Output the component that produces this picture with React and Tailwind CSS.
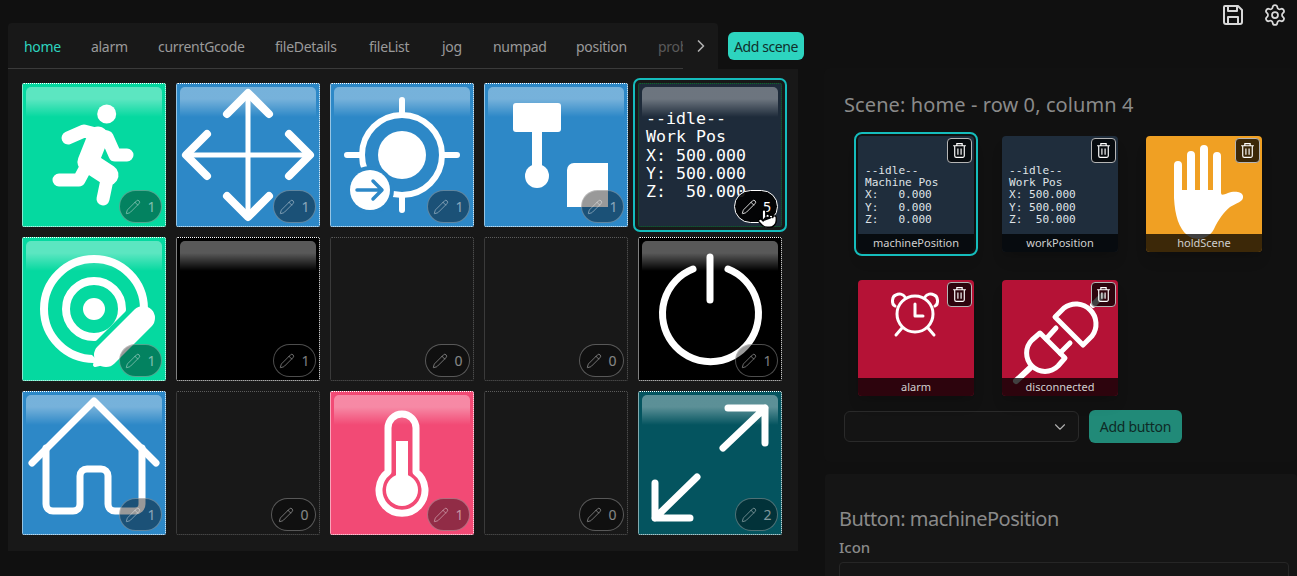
import React from "react";
import { Pencil, Pointer, ChevronRight, ChevronDown, Settings } from "lucide-react";

// Icons are drawn in the coordinates of their button (144 for grid cells, 116 for tiles)
const W = { fill: "none", stroke: "#fff", strokeLinecap: "round", strokeLinejoin: "round" };

const RunIcon = () => (
  <g {...W}>
    <circle cx="84.7" cy="31" r="9.5" fill="#fff" stroke="none" />
    <path d="M46 55 L62 48 L85 54 L93 72 L105 72" strokeWidth="13" />
    <path d="M76 54 L66 79 L86 92" strokeWidth="21" />
    <path d="M86 92 L81 116" strokeWidth="13" />
    <path d="M64 84 L57 97 L37 97" strokeWidth="13" />
  </g>
);

const MoveIcon = () => (
  <g {...W}>
    <path d="M72 10 V134 M10 72 H134" strokeWidth="5" />
    <path d="M51 31 L72 10 L93 31 M51 113 L72 134 L93 113 M31 51 L10 72 L31 93 M113 51 L134 72 L113 93" strokeWidth="8" />
  </g>
);

const TargetIcon = ({ bg }) => (
  <g {...W}>
    <circle cx="72" cy="72" r="24" fill="#fff" stroke="none" />
    <circle cx="72" cy="72" r="40" strokeWidth="6" />
    <path d="M72 17 V30 M72 114 V127 M17 72 H30 M114 72 H127" strokeWidth="6" />
    <circle cx="40" cy="107" r="24" fill={bg} stroke="none" />
    <circle cx="40" cy="107" r="20" fill="#fff" stroke="none" />
    <path d="M27 107 H51 M43 98 L52 107 L43 116" stroke={bg} strokeWidth="3.5" />
  </g>
);

const ProbeIcon = () => (
  <g>
    <rect x="29" y="20" width="48" height="29" rx="3" fill="#fff" />
    <rect x="48" y="49" width="10" height="36" fill="#fff" />
    <circle cx="53" cy="93" r="12" fill="#fff" />
    <path d="M90 80 H124 V124 H83 V87 A7 7 0 0 1 90 80 Z" fill="#fff" />
  </g>
);

const TargetEditIcon = ({ bg }) => (
  <g {...W}>
    <circle cx="72" cy="72" r="11" fill="#fff" stroke="none" />
    <circle cx="72" cy="72" r="28" strokeWidth="8" />
    <circle cx="72" cy="72" r="50" strokeWidth="8" />
    <path d="M125 77 L77 125" stroke={bg} strokeWidth="34" strokeLinecap="butt" />
    <path d="M121 81 L84 118" strokeWidth="24" />
    <path d="M76 116 L73 128 L86 125 Z" fill="#fff" strokeWidth="4" />
  </g>
);

const PowerIcon = () => (
  <g {...W}>
    <path d="M72 20 V63" strokeWidth="7" />
    <path d="M55 32 A48 48 0 1 0 90 32" strokeWidth="7" />
  </g>
);

const HomeIcon = () => (
  <g {...W}>
    <path d="M10 72 L72 10 L134 72" strokeWidth="7" />
    <path d="M24 57 V113 a7 7 0 0 0 7 7 H51 a7 7 0 0 0 7 -7 V85 a7 7 0 0 1 7 -7 H79 a7 7 0 0 1 7 7 V113 a7 7 0 0 0 7 7 H113 a7 7 0 0 0 7 -7 V57" strokeWidth="7" />
  </g>
);

const ThermoIcon = () => (
  <g {...W}>
    <path d="M58 81 V37 a14 14 0 0 1 28 0 V81 a23 23 0 1 1 -28 0 Z" strokeWidth="7" />
    <circle cx="72" cy="99" r="16" fill="#fff" stroke="none" />
    <path d="M72 50 V95" strokeWidth="12" strokeLinecap="butt" />
  </g>
);

const ExpandIcon = () => (
  <g {...W}>
    <path d="M90 17 H127 V52 M127 17 L85 57" strokeWidth="7" />
    <path d="M17 92 V127 H52 M17 127 L59 86" strokeWidth="7" />
  </g>
);

const HandIcon = () => (
  <g>
    <path d="M32 29 V58 M45 19 V58 M58 13 V58 M71 20 V58" {...W} strokeWidth="8" />
    <path d="M28 54 V62 C29 80 33 92 41 99 C50 106 63 103 68 93 C72 84 78 76 84 71 C90 67 98 66 97 60 C96 55 87 55 82 57 C77 59 75 60 75 56 V54 Z" fill="#fff" />
  </g>
);

const AlarmIcon = () => (
  <g {...W} strokeWidth="3">
    <circle cx="57" cy="34" r="18" />
    <path d="M57 24 V36 H65" />
    <path d="M37 26 C33 24 34 16 38 15 C41 13 45 14 47 17 M77 26 C81 24 80 16 76 15 C73 13 69 14 67 17" />
    <path d="M44 48 L38 55 M70 48 L76 55" />
  </g>
);

const PlugIcon = () => (
  <g {...W} strokeWidth="5">
    <path d="M53 37 L62 28 A20 20 0 0 1 90 56 L81 65 Z" />
    <path d="M91 25 L100 16" strokeWidth="6" />
    <path d="M38 53 L63 78 L56 86 A18 18 0 0 1 30 60 Z" />
    <path d="M44 59 L54 48 M58 73 L68 63" />
    <path d="M28 88 L14 101" strokeWidth="6" />
  </g>
);

const Trash = () => (
  <svg viewBox="0 0 16 16" className="w-[17px] h-[17px]" fill="none" stroke="#fff" strokeWidth="1.1">
    <path d="M2 3.5 H14 M5.5 3.5 V1.5 H10.5 V3.5 M3.5 3.5 V13 a1.5 1.5 0 0 0 1.5 1.5 H11 a1.5 1.5 0 0 0 1.5 -1.5 V3.5 M6.5 6 V12 M9.5 6 V12" />
  </svg>
);

const IDLE_WORK = "--idle--\nWork Pos\nX: 500.000\nY: 500.000\nZ:  50.000";
const IDLE_MACHINE = "--idle--\nMachine Pos\nX:   0.000\nY:   0.000\nZ:   0.000";
const MONO = "font-['DejaVu_Sans_Mono',monospace]";

function Cell({ bg, icon: Icon, count, text, active }) {
  const empty = !bg;
  return (
    <div
      className={`relative w-[144px] h-[144px] rounded-[2px] border border-dotted ${
        active ? "outline-2 outline-offset-[3.5px] outline-[#15bcbc] border-[#0b6a25]" : empty ? "border-[#5c5c5c]" : "border-white"
      }`}
      style={{ background: bg || "transparent" }}
    >
      {Icon && (
        <svg viewBox="0 0 144 144" className="absolute -inset-px w-[144px] h-[144px]">
          <Icon bg={bg} />
        </svg>
      )}
      {text && (
        <pre className={`absolute left-[7px] top-[26px] text-[16.6px] leading-[18.3px] text-white ${MONO}`}>{text}</pre>
      )}
      {!empty && (
        <div className="absolute left-[3px] top-[3px] w-[136px] h-[30px] rounded-t-[5px] bg-gradient-to-b from-white/35 from-40% to-white/0" />
      )}
      <div
        className={`absolute bottom-[3px] right-[3px] h-[33px] rounded-[17px] border flex items-center justify-center gap-[6px] ${
          active
            ? "w-[44px] bg-black/90 border-white text-white"
            : empty
              ? "w-[45px] bg-black/30 border-white/30 text-white/50"
              : "w-[43px] bg-black/40 border-white/30 text-white/50"
        }`}
      >
        <Pencil size={16} strokeWidth={1.25} />
        <span className="text-[14px]">{count}</span>
      </div>
      {active && (
        <Pointer size={21} strokeWidth={1.5} fill="#fff" color="#000" className="absolute left-[118px] top-[124px]" />
      )}
    </div>
  );
}

function Tile({ bg, icon: Icon, text, label, active }) {
  return (
    <div className={`relative w-[116px] h-[116px] rounded-[4px] overflow-visible shadow-lg ${active ? "outline-2 outline-offset-2 outline-[#15bcbc]" : ""}`} style={{ background: bg }}>
      {Icon && (
        <svg viewBox="0 0 116 116" className="absolute inset-0 w-[116px] h-[116px]">
          <Icon />
        </svg>
      )}
      {text && (
        <pre className={`absolute left-[7px] top-[29px] text-[11.1px] leading-[12.2px] text-[#dfe3e7] ${MONO}`}>{text}</pre>
      )}
      <div className="absolute inset-x-0 bottom-0 h-[18px] rounded-b-[4px] bg-black/75 text-center text-[11px] leading-[18px] text-[#d0d0d0]">
        {label}
      </div>
      <div className="absolute top-[2px] right-[2px] w-[25px] h-[25px] rounded-[4px] border border-[#b5b5b5] bg-black/75 flex items-center justify-center">
        <Trash />
      </div>
    </div>
  );
}

const TABS = [
  { name: "home", width: "w-[67px]" },
  { name: "alarm", width: "w-[67px]" },
  { name: "currentGcode", width: "w-[117px]" },
  { name: "fileDetails", width: "w-[94px]" },
  { name: "fileList", width: "w-[73px]" },
  { name: "jog", width: "w-[51px]" },
  { name: "numpad", width: "w-[83px]" },
  { name: "position", width: "w-[82px]" },
  { name: "probe", width: "w-[67px]" },
];

const CELLS = [
  { bg: "#05d9a0", icon: RunIcon, count: 1 },
  { bg: "#2d88c7", icon: MoveIcon, count: 1 },
  { bg: "#2d88c7", icon: TargetIcon, count: 1 },
  { bg: "#2d88c7", icon: ProbeIcon, count: 1 },
  { bg: "#1e2b3a", text: IDLE_WORK, count: 5, active: true },
  { bg: "#05d9a0", icon: TargetEditIcon, count: 1 },
  { bg: "#000000", count: 1 },
  { count: 0 },
  { count: 0 },
  { bg: "#000000", icon: PowerIcon, count: 1 },
  { bg: "#2d88c7", icon: HomeIcon, count: 1 },
  { count: 0 },
  { bg: "#f24a75", icon: ThermoIcon, count: 1 },
  { count: 0 },
  { bg: "#04545f", icon: ExpandIcon, count: 2 },
];

const TILES = [
  { bg: "#1f2d3c", text: IDLE_MACHINE, label: "machinePosition", active: true },
  { bg: "#1f2d3c", text: IDLE_WORK, label: "workPosition" },
  { bg: "#f0a023", icon: HandIcon, label: "holdScene" },
  { bg: "#b51236", icon: AlarmIcon, label: "alarm" },
  { bg: "#b51236", icon: PlugIcon, label: "disconnected" },
];

export default function App() {
  return (
    <div className="flex h-screen overflow-hidden bg-[#101010] font-['Noto_Sans',sans-serif]">
      {/* left: scene tabs and button grid */}
      <div className="w-[824px] shrink-0 pl-2 pt-[23px]">
        <div className="flex items-start">
          <div className="w-[710px] h-[46px] bg-[#181818] rounded-t-[4px] flex">
            <div className="w-[675px] h-[46px] overflow-hidden flex border-b border-[#3a3a3a]">
              {TABS.map((t, i) => (
                <div
                  key={t.name}
                  className={`h-[46px] shrink-0 pl-4 pt-[14px] text-[14px] leading-[19px] tracking-[-0.3px] ${t.width} ${
                    i === 0 ? "text-[#2dd4bf] border-b border-[#2dd4bf]" : i === 8 ? "text-[#5a5a5a]" : "text-[#9a9a9a]"
                  }`}
                >
                  {t.name}
                </div>
              ))}
            </div>
            <div className="flex-1 flex items-center justify-center text-[#b0b0b0]">
              <ChevronRight size={20} strokeWidth={2} />
            </div>
          </div>
          <button className="ml-[10px] mt-[9px] w-[76px] h-[28px] rounded-[6px] bg-[#2dd4bf] text-[14px] tracking-[-0.4px] text-[#10302c]">
            Add scene
          </button>
        </div>
        <div className="w-[790px] h-[482px] bg-[#181818] p-[14px] grid grid-cols-[repeat(5,144px)] auto-rows-[144px] gap-[10px]">
          {CELLS.map((c, i) => (
            <Cell key={i} {...c} />
          ))}
        </div>
      </div>

      {/* right: editors */}
      <div className="flex-1 flex flex-col min-w-0">
        <div className="h-[68px] shrink-0 flex justify-end gap-[18px] pr-[10px] pt-[3px] text-[#d8d8d8]">
          <svg viewBox="0 0 24 24" className="w-[24px] h-[24px]" fill="none" stroke="currentColor" strokeWidth="2" strokeLinejoin="round">
            <path d="M4 3 H17 L21 7 V19 a2 2 0 0 1 -2 2 H5 a2 2 0 0 1 -2 -2 V4 a1 1 0 0 1 1 -1 Z" />
            <path d="M7 3 V8 H16 V3 M7 21 V14 H17 V21" />
          </svg>
          <Settings size={24} strokeWidth={1.75} />
        </div>
        <div className="h-[394px] shrink-0 bg-[#111111] rounded-[6px] px-5 pt-[23px]">
          <h2 className="text-[20px] leading-[28px] tracking-[0.1px] text-[#8a8a8a]">Scene: home - row 0, column 4</h2>
          <div className="mt-[17px] ml-[14px] grid grid-cols-[repeat(3,116px)] auto-rows-[116px] gap-x-[28px] gap-y-[28px]">
            {TILES.map((t) => (
              <Tile key={t.label} {...t} />
            ))}
          </div>
          <div className="mt-[14px] flex items-center gap-[10px]">
            <div className="w-[235px] h-[31px] rounded-[6px] border border-[#2a2a2a] bg-[#141414] flex items-center justify-end pr-[9px] text-[#b0b0b0]">
              <ChevronDown size={18} strokeWidth={1.5} />
            </div>
            <button className="w-[93px] h-[33px] rounded-[6px] bg-[#218a78] text-[14px] tracking-[-0.3px] text-[#0e2a26]">
              Add button
            </button>
          </div>
        </div>
        <div className="mt-[12px] flex-1 ml-px bg-[#151515] rounded-[4px] px-[14px] pt-[32px]">
          <h2 className="text-[20px] leading-[26px] tracking-[-0.5px] text-[#8a8a8a]">Button: machinePosition</h2>
          <div className="mt-[5px] text-[15px] leading-[20px] font-medium text-[#8a8a8a]">Icon</div>
          <div className="mt-[5px] w-[450px] h-[40px] rounded-[4px] border border-[#262626]" />
        </div>
      </div>
    </div>
  );
}
